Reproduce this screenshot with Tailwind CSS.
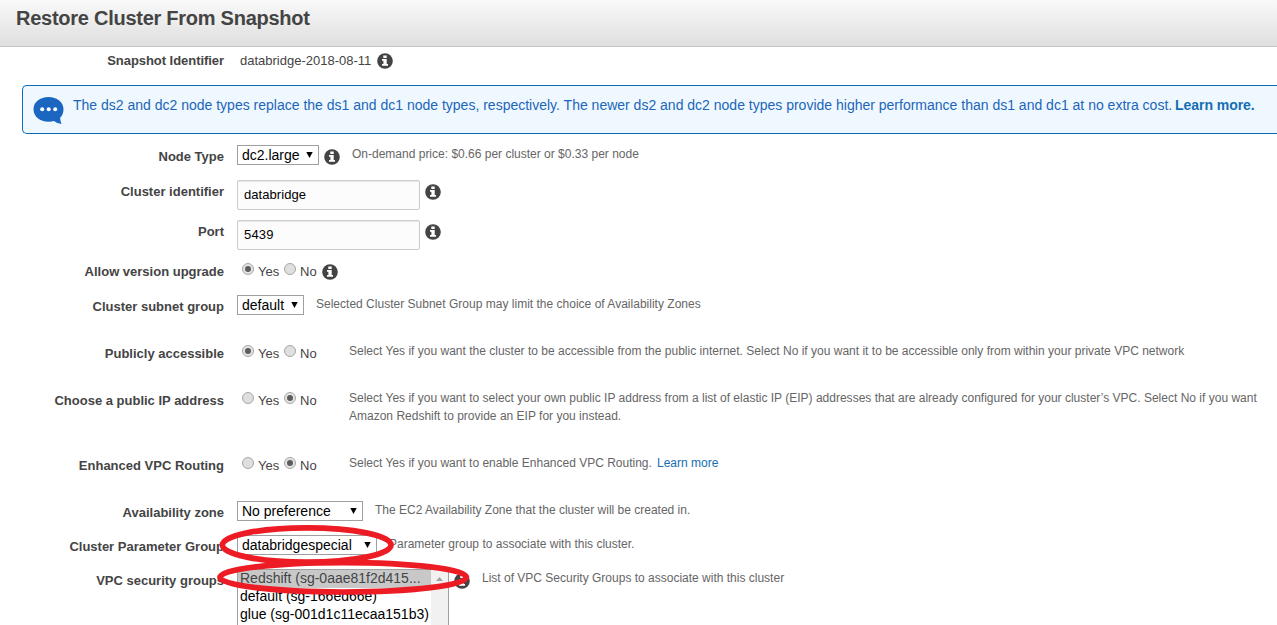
<!DOCTYPE html>
<html lang="en">
<head>
<meta charset="utf-8">
<title>Restore Cluster From Snapshot</title>
<script src="https://cdn.jsdelivr.net/npm/@tailwindcss/browser@4"></script>
</head>
<body class="relative h-[625px] w-[1277px] overflow-hidden bg-white font-['Liberation_Sans',Arial,sans-serif] text-[13px] text-[#444] leading-[22px]">
<svg class="hidden">
  <symbol id="info" viewBox="0 0 16 16"><circle cx="8" cy="8" r="7.8" fill="#444"/><path d="M6.300 2.400h3.400v2.500H6.300zM5 6h4.700v5h1.300v1.700H5V11h1.400V7.700H5z" fill="#fff"/></symbol>
  <symbol id="arrow" viewBox="0 0 7 6"><path d="M.3 0h6.400L3.500 6z" fill="#000"/></symbol>
  <linearGradient id="face" x2="0" y2="1"><stop stop-color="#ededed"/><stop offset="1" stop-color="#d8d8d8"/></linearGradient>
  <symbol id="off" viewBox="0 0 12 12"><circle cx="6" cy="6" r="5.5" fill="#dfdfdf" stroke="#a6a6a6"/></symbol>
  <symbol id="on" viewBox="0 0 12 12"><circle cx="6" cy="6" r="5.5" fill="#e4e4e4" stroke="#a6a6a6"/><circle cx="6" cy="6" r="3" fill="#5c5c5c"/></symbol>
</svg>

<header class="h-[47px] border-b border-[#c4c4c4] bg-gradient-to-b from-[#f9f9f9] to-[#dfdfdf] pl-4 pt-[6px]">
  <h1 class="whitespace-nowrap text-[20px] font-bold leading-6 tracking-[-0.26px]">Restore Cluster From Snapshot</h1>
</header>

<div class="flex h-[38px] pt-[3px]">
  <div class="w-[224px] shrink-0 text-right font-bold tracking-[-0.05px]">Snapshot Identifier</div>
  <div class="ml-4 w-[131px] whitespace-nowrap">databridge-2018-08-11</div>
  <svg class="ml-[6px] mt-[3px] size-4"><use href="#info"/></svg>
</div>

<div class="ml-[22px] flex h-[49px] rounded-l-[5px] border border-r-0 border-[#0a6ab5] bg-[#f0f8ff] pl-[10px] text-[14px] text-[#1b66bb]">
  <svg class="mt-[11px] h-[28px] w-[31px] shrink-0" viewBox="0 0 31 28"><path d="M15.500 0C24 0 30.500 5 30.500 12.300c0 4-1.400 6.500-3.400 8.500.1 2.200.7 4.200 1.400 6.200-2.900-.3-5-1.100-7.400-2.900-1.800.5-3.500.6-5.600.6C7 24.700.500 19.600.500 12.300S7 0 15.500 0z" fill="#1b66c0"/><g fill="#fff"><circle cx="9.200" cy="12.300" r="2"/><circle cx="15.700" cy="12.300" r="2"/><circle cx="22.200" cy="12.300" r="2"/></g></svg>
  <p class="ml-[9px] mt-2 whitespace-nowrap">The ds2 and dc2 node types replace the ds1 and dc1 node types, respectively. The newer ds2 and dc2 node types provide higher performance than ds1 and dc1 at no extra cost. <b class="-ml-px text-[#146eb4] tracking-[-0.05px]">Learn more.</b></p>
</div>

<main class="pt-[11px]">
  <div class="flex h-[35px] items-start">
    <div class="w-[224px] shrink-0 pt-px text-right font-bold">Node Type</div>
    <div class="ml-[13px] flex h-[20px] w-[82px] items-center justify-between border border-[#a0a0a0] bg-white pl-1 pr-[5px] text-[14px] text-black"><span>dc2.large</span><svg class="h-[6px] w-[7px]"><use href="#arrow"/></svg></div>
    <svg class="ml-[5px] mt-1 size-4"><use href="#info"/></svg>
    <p class="ml-3 text-[12px] leading-[18px] text-[#666]">On-demand price: $0.66 per cluster or $0.33 per node</p>
  </div>
  <div class="flex h-10 items-start">
    <div class="w-[224px] shrink-0 pt-px text-right font-bold">Cluster identifier</div>
    <div class="ml-[13px] flex h-[30px] w-[183px] items-center rounded-[2px] border border-[#ccc] bg-[#fcfcfc] pl-[6px] text-black tracking-[0.06px] shadow-[inset_0_1px_1px_rgba(0,0,0,0.08)]">databridge</div>
    <svg class="ml-[5px] mt-1 size-4"><use href="#info"/></svg>
  </div>
  <div class="flex h-10 items-start">
    <div class="w-[224px] shrink-0 pt-px text-right font-bold">Port</div>
    <div class="ml-[13px] flex h-[30px] w-[183px] items-center rounded-[2px] border border-[#ccc] bg-[#fcfcfc] pl-[6px] text-black tracking-[0.15px] shadow-[inset_0_1px_1px_rgba(0,0,0,0.08)]">5439</div>
    <svg class="ml-[5px] mt-1 size-4"><use href="#info"/></svg>
  </div>
  <div class="flex h-[35px] items-start">
    <div class="w-[224px] shrink-0 pt-px text-right font-bold">Allow version upgrade</div>
    <svg class="ml-[18px] mt-[3px] size-3"><use href="#on"/></svg><span class="ml-1 w-[26px] pt-px">Yes</span>
    <svg class="mt-[3px] size-3"><use href="#off"/></svg><span class="ml-1 w-[22px] pt-px">No</span>
    <svg class="mt-1 size-4"><use href="#info"/></svg>
  </div>
  <div class="flex h-[47px] items-start">
    <div class="w-[224px] shrink-0 pt-px text-right font-bold">Cluster subnet group</div>
    <div class="ml-[13px] flex h-[20px] w-[67px] items-center justify-between border border-[#a0a0a0] bg-white pl-1 pr-[5px] text-[14px] text-black"><span>default</span><svg class="h-[6px] w-[7px]"><use href="#arrow"/></svg></div>
    <p class="ml-3 text-[12px] leading-[18px] tracking-[0.01px] text-[#666]">Selected Cluster Subnet Group may limit the choice of Availability Zones</p>
  </div>
  <div class="flex h-[47px] items-start">
    <div class="w-[224px] shrink-0 pt-px text-right font-bold">Publicly accessible</div>
    <svg class="ml-[18px] mt-[3px] size-3"><use href="#on"/></svg><span class="ml-1 w-[26px] pt-px">Yes</span>
    <svg class="mt-[3px] size-3"><use href="#off"/></svg><span class="ml-1 w-[22px] pt-px">No</span>
    <p class="ml-[27px] whitespace-nowrap text-[12px] leading-[18px] tracking-[0.005px] text-[#666]">Select Yes if you want the cluster to be accessible from the public internet. Select No if you want it to be accessible only from within your private VPC network</p>
  </div>
  <div class="flex h-[65px] items-start">
    <div class="w-[224px] shrink-0 pt-px text-right font-bold">Choose a public IP address</div>
    <svg class="ml-[18px] mt-[3px] size-3"><use href="#off"/></svg><span class="ml-1 w-[26px] pt-px">Yes</span>
    <svg class="mt-[3px] size-3"><use href="#on"/></svg><span class="ml-1 w-[22px] pt-px">No</span>
    <p class="ml-[27px] whitespace-nowrap text-[12px] leading-[18px] tracking-[0.005px] text-[#666]">Select Yes if you want to select your own public IP address from a list of elastic IP (EIP) addresses that are already configured for your cluster’s VPC. Select No if you want<br>Amazon Redshift to provide an EIP for you instead.</p>
  </div>
  <div class="flex h-[47px] items-start">
    <div class="w-[224px] shrink-0 pt-px text-right font-bold">Enhanced VPC Routing</div>
    <svg class="ml-[18px] mt-[3px] size-3"><use href="#off"/></svg><span class="ml-1 w-[26px] pt-px">Yes</span>
    <svg class="mt-[3px] size-3"><use href="#on"/></svg><span class="ml-1 w-[22px] pt-px">No</span>
    <p class="ml-[27px] w-[308px] shrink-0 whitespace-nowrap text-[12px] leading-[18px] text-[#666]">Select Yes if you want to enable Enhanced VPC Routing.</p>
    <a class="whitespace-nowrap text-[12px] leading-[18px] text-[#146eb4]">Learn more</a>
  </div>
  <div class="flex h-[34px] items-start">
    <div class="w-[224px] shrink-0 pt-px text-right font-bold">Availability zone</div>
    <div class="ml-[13px] flex h-[20px] w-[126px] items-center justify-between border border-[#a0a0a0] bg-white pl-1 pr-[5px] text-[14px] text-black"><span>No preference</span><svg class="h-[6px] w-[7px]"><use href="#arrow"/></svg></div>
    <p class="ml-3 text-[12px] leading-[18px] text-[#666]">The EC2 Availability Zone that the cluster will be created in.</p>
  </div>
  <div class="flex h-[34px] items-start">
    <div class="w-[224px] shrink-0 pt-px text-right font-bold">Cluster Parameter Group</div>
    <div class="ml-[13px] flex h-[20px] w-[140px] items-center justify-between border border-[#a0a0a0] bg-white pl-1 pr-[5px] text-[14px] text-black"><span>databridgespecial</span><svg class="h-[6px] w-[7px]"><use href="#arrow"/></svg></div>
    <p class="ml-3 text-[12px] leading-[18px] text-[#666]">Parameter group to associate with this cluster.</p>
  </div>
  <div class="flex h-[56px] items-start">
    <div class="w-[224px] shrink-0 pt-px text-right font-bold">VPC security groups</div>
    <div class="ml-[13px] flex h-[60px] w-[212px] border border-[#a0a0a0] bg-white text-[14px] leading-[16px] text-black">
      <div class="w-[193px] whitespace-nowrap">
        <div class="h-[18px] bg-[#c8c8c8] pl-[2px] text-[#444]">Redshift (sg-0aae81f2d415...</div>
        <div class="h-[18px] pl-[2px]">default (sg-166ed66e)</div>
        <div class="h-[18px] pl-[2px]">glue (sg-001d1c11ecaa151b3)</div>
      </div>
      <div class="w-[17px] bg-[#f1f1f1] pl-[5px] pt-[7px]"><svg class="h-[4px] w-[7px]" viewBox="0 0 7 4"><path d="M0 4h7L3.500 0z" fill="#a3a3a3"/></svg></div>
    </div>
    <svg class="ml-[5px] mt-1 size-4"><use href="#info"/></svg>
    <p class="ml-3 text-[12px] leading-[18px] text-[#666]">List of VPC Security Groups to associate with this cluster</p>
  </div>
</main>

<svg class="absolute left-0 top-0 h-[625px] w-[1277px]" fill="none" stroke="#ed1c24" stroke-width="5.7">
  <ellipse cx="306.700" cy="545" rx="84.300" ry="17.200"/>
  <ellipse cx="343.200" cy="577.300" rx="123.300" ry="14.700"/>
</svg>
</body>
</html>
